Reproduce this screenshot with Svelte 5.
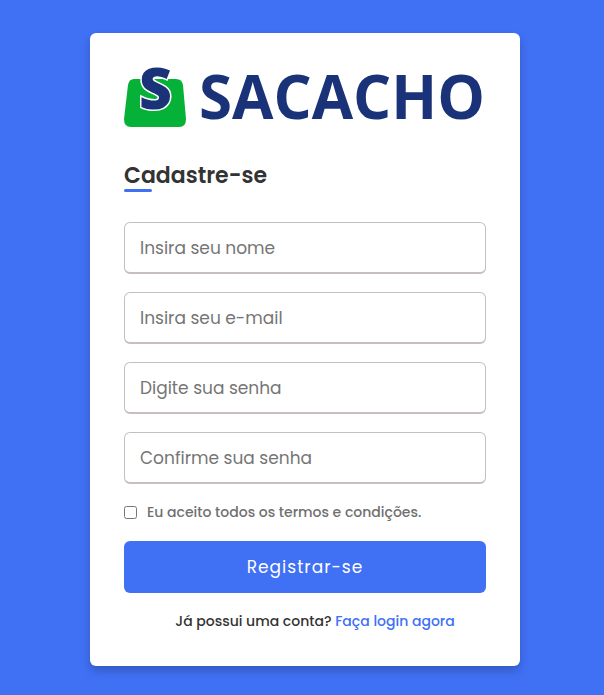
<script>
  const fields = [
    { id: 'nome', type: 'text', label: 'Insira seu nome', autocomplete: 'name' },
    { id: 'email', type: 'email', label: 'Insira seu e-mail', autocomplete: 'email' },
    { id: 'senha', type: 'password', label: 'Digite sua senha', autocomplete: 'new-password' },
    { id: 'confirma', type: 'password', label: 'Confirme sua senha', autocomplete: 'new-password' }
  ];
</script>

<main class="page">
  <section class="card">
    <svg class="logo" viewBox="0 0 362 60" role="img" aria-label="Sacacho">
      <path class="bag" d="M10 12H52Q58 12 59 18L62 52Q62 60 55 60H7Q0 60 0 52L4 18Q5 12 10 12Z" />
      <text class="mark" x="15" y="42">S</text>
      <text class="wordmark" x="75" y="52">SACACHO</text>
    </svg>

    <h2>Cadastre-se</h2>

    <form onsubmit={(event) => event.preventDefault()}>
      {#each fields as field (field.id)}
        <input
          class="field"
          id={field.id}
          name={field.id}
          type={field.type}
          placeholder={field.label}
          aria-label={field.label}
          autocomplete={field.autocomplete}
          required
        />
      {/each}

      <div class="policy">
        <input id="termos" type="checkbox" />
        <label for="termos">Eu aceito todos os termos e condições.</label>
      </div>

      <button type="submit">Registrar-se</button>

      <p class="login">Já possui uma conta? <a href="#login">Faça login agora</a></p>
    </form>
  </section>
</main>

<style>
  :global(body) {
    margin: 0;
    background: #4070f4;
  }

  .page,
  .page * {
    box-sizing: border-box;
  }

  .page {
    display: flex;
    justify-content: center;
    align-items: flex-start;
    min-height: 100vh;
    padding: 33px 28px 28px 34px;
    background: #4070f4;
    font-family: Poppins, Inter, sans-serif;
  }

  .card {
    width: 100%;
    max-width: 430px;
    padding: 34px;
    border-radius: 6px;
    background: #fff;
    box-shadow: 0 5px 10px rgba(0, 0, 0, 0.2);
  }

  .logo {
    display: block;
    width: 100%;
    overflow: visible;
  }

  .bag {
    fill: #06b137;
  }

  .mark,
  .wordmark {
    fill: #1a3378;
    font-family: "Open Sans", "Noto Sans", sans-serif;
    font-weight: 700;
    font-size: 60px;
  }

  .mark {
    font-size: 57px;
    font-weight: 800;
    stroke: #fff;
    stroke-width: 3px;
    paint-order: stroke;
  }

  h2 {
    position: relative;
    margin: 32px 0 0;
    color: #333;
    font-size: 22px;
    font-weight: 600;
    line-height: 33px;
  }

  h2::before {
    content: "";
    position: absolute;
    left: 0;
    bottom: 0;
    width: 28px;
    height: 3px;
    border-radius: 12px;
    background: #4070f4;
  }

  form {
    display: flex;
    flex-direction: column;
    gap: 18px;
    margin-top: 30px;
  }

  .field {
    width: 100%;
    height: 52px;
    padding: 0 15px;
    border: 1px solid #c7bebe;
    border-bottom-width: 2px;
    border-radius: 6px;
    outline: none;
    background: #fff;
    color: #333;
    font-family: inherit;
    font-size: 17px;
  }

  .field::placeholder {
    color: #757575;
  }

  .field:focus {
    border-color: #4070f4;
  }

  .policy {
    display: flex;
    align-items: center;
    gap: 10px;
    color: #707070;
    font-size: 14px;
    font-weight: 500;
    line-height: 21px;
  }

  .policy input {
    width: 13px;
    height: 13px;
    margin: 0;
  }

  button {
    height: 52px;
    border: 0;
    border-radius: 6px;
    background: #4070f4;
    color: #fff;
    font-family: inherit;
    font-size: 17px;
    font-weight: 400;
    letter-spacing: 1px;
    cursor: pointer;
  }

  button:hover {
    background: #0e4bf1;
  }

  .login {
    margin: 0;
    padding-left: 20px;
    color: #333;
    font-size: 14px;
    font-weight: 500;
    line-height: 21px;
    text-align: center;
  }

  .login a {
    color: #4070f4;
    text-decoration: none;
  }

  .login a:hover {
    text-decoration: underline;
  }
</style>
